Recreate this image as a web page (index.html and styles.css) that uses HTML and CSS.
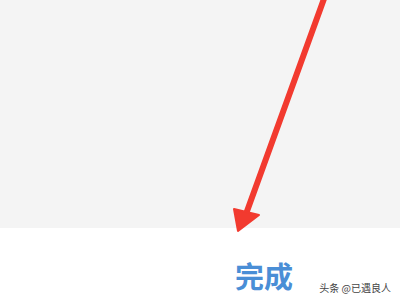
FILE: index.html
```html
<!DOCTYPE html>
<html>
<head>
<meta charset="utf-8">
<link rel="stylesheet" href="styles.css">
</head>
<body>
<div class="screen">
  <div class="content"></div>
  <div class="footer">
    <span class="done">完成</span>
  </div>
  <svg class="arrow" width="400" height="300" viewBox="0 0 400 300">
    <line x1="325" y1="-4" x2="246" y2="214" stroke="#f23a2f" stroke-width="6" stroke-linecap="round"/>
    <polygon points="238,231 234,209 259,215" fill="#f23a2f" stroke="#f23a2f" stroke-width="2" stroke-linejoin="round"/>
  </svg>
  <div class="watermark">头条 @已遇良人</div>
</div>
</body>
</html>
```
FILE: styles.css
```css
html, body {
  margin: 0;
  padding: 0;
  background: #ffffff;
}
.screen {
  position: relative;
  width: 400px;
  height: 300px;
  overflow: hidden;
  display: flex;
  flex-direction: column;
  font-family: "Noto Sans CJK SC", "Noto Sans", sans-serif;
}
.content {
  height: 228px;
  background: #f4f4f4;
}
.footer {
  flex: 1;
  background: #ffffff;
  padding: 33px 0 0 235px;
}
.done {
  display: block;
  font-size: 29px;
  line-height: 29px;
  font-weight: 700;
  color: #4a8ed6;
}
.arrow {
  position: absolute;
  left: 0;
  top: 0;
}
.watermark {
  position: absolute;
  right: 9px;
  bottom: 6px;
  font-size: 10px;
  line-height: 12px;
  color: #444444;
}
```
